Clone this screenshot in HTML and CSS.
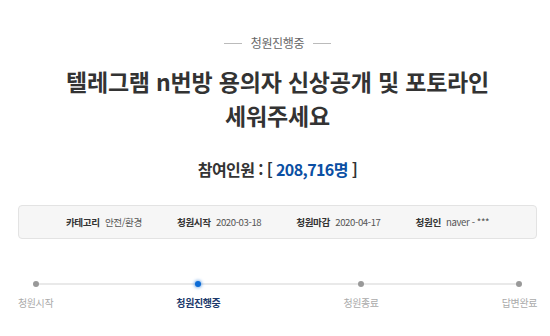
FILE: index.html
```html
<!DOCTYPE html>
<html lang="ko">
<head>
  <meta charset="UTF-8" />
  <meta name="viewport" content="width=device-width, initial-scale=1.0"/>
  <title>청원진행중</title>
  <link rel="stylesheet" href="styles.css">
</head>
<body>

<div class="petition">
  <div class="status"><span>청원진행중</span></div>

  <h1 class="title">텔레그램 n번방 용의자 신상공개 및 포토라인<br>세워주세요</h1>

  <div class="count">참여인원 : [ <span class="count-num">208,716명</span> ]</div>

  <ul class="info">
    <li><b>카테고리</b> 안전/환경</li>
    <li><b>청원시작</b> 2020-03-18</li>
    <li><b>청원마감</b> 2020-04-17</li>
    <li><b>청원인</b> naver - ***</li>
  </ul>

  <ol class="steps">
    <li class="step">청원시작</li>
    <li class="step active">청원진행중</li>
    <li class="step">청원종료</li>
    <li class="step">답변완료</li>
  </ol>
</div>

</body>
</html>
```

FILE: styles.css
```css
:root {
  --text: #333;
  --muted: #666;
  --blue: #0b4fa3;
  --dot-blue: #0b6bd6;
  --box-bg: #f6f6f6;
  --box-line: #e3e3e3;
}

* {
  box-sizing: border-box;
}

body {
  margin: 0;
  font-family: "Noto Sans CJK KR", "Noto Sans", sans-serif;
  color: var(--text);
  background: #fff;
}

.petition {
  padding: 35px 13px 0 18px;
  text-align: center;
}

.status {
  display: flex;
  justify-content: center;
  align-items: center;
  gap: 9px;
  font-size: 12px;
  line-height: 16px;
  color: var(--muted);
  letter-spacing: -0.3px;
}

.status::before,
.status::after {
  content: "";
  width: 18px;
  height: 1px;
  background: #bbb;
}

.title {
  margin: 13px 0 0;
  font-size: 23px;
  line-height: 34px;
  font-weight: 700;
  letter-spacing: -0.2px;
}

.count {
  margin-top: 26px;
  font-size: 16px;
  line-height: 22px;
  font-weight: 700;
  letter-spacing: -0.6px;
}

.count-num {
  color: var(--blue);
}

.info {
  list-style: none;
  margin: 25px 0 0;
  padding: 0;
  height: 34px;
  display: flex;
  justify-content: center;
  align-items: center;
  gap: 35px;
  background: var(--box-bg);
  border: 1px solid var(--box-line);
  border-radius: 4px;
  font-size: 9.6px;
  line-height: 12px;
  color: #555;
  letter-spacing: -0.4px;
}

.info b {
  color: var(--text);
  margin-right: 3px;
}

.steps {
  list-style: none;
  position: relative;
  margin: 42px 0 0;
  padding: 0;
  display: flex;
  justify-content: space-between;
}

.steps::before {
  content: "";
  position: absolute;
  top: 2px;
  left: 17px;
  right: 17px;
  height: 2px;
  background: #e9e9e9;
}

.step {
  position: relative;
  display: flex;
  flex-direction: column;
  align-items: center;
  font-size: 10px;
  line-height: 14px;
  color: #aaa;
  letter-spacing: -0.4px;
}

.step::before {
  content: "";
  width: 6px;
  height: 6px;
  border-radius: 50%;
  background: #999;
  margin-bottom: 9px;
}

.step.active {
  color: #1d3a6c;
  font-weight: 700;
}

.step.active::before {
  background: var(--dot-blue);
  box-shadow: 0 0 3px 1px rgba(11, 107, 214, 0.45);
}
```
